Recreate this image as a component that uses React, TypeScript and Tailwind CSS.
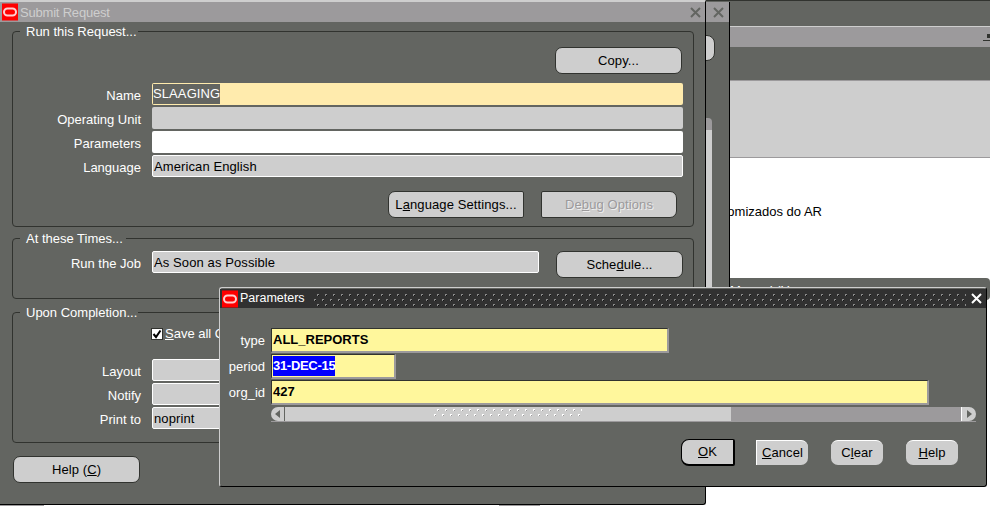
import type { ReactNode } from "react";

function OracleLogo({ className }: { className: string }) {
  return (
    <svg viewBox="0 0 16 17" className={className}>
      <rect width="16" height="17" fill="#ff0000" />
      <rect x="2" y="5" width="12" height="7" rx="3.5" fill="none" stroke="#ffcfcf" strokeWidth="2" />
    </svg>
  );
}

function CloseIcon({ className, color }: { className: string; color: string }) {
  return (
    <svg viewBox="0 0 11 11" className={className}>
      <path d="M1 1L10 10M10 1L1 10" stroke={color} strokeWidth="2" fill="none" />
    </svg>
  );
}

function Dots({ id, light, dark, className }: { id: string; light: string; dark: string; className: string }) {
  return (
    <svg className={className}>
      <defs>
        <pattern id={id} width="8" height="10" patternUnits="userSpaceOnUse">
          <rect x="3" y="0" width="2" height="2" fill={light} />
          <rect x="4" y="1" width="1" height="1" fill={dark} />
          <rect x="0" y="5" width="2" height="2" fill={light} />
          <rect x="1" y="6" width="1" height="1" fill={dark} />
        </pattern>
      </defs>
      <rect width="100%" height="100%" fill={`url(#${id})`} />
    </svg>
  );
}

function GroupBox({ title, titleWidth, className, children }: { title: string; titleWidth: string; className: string; children: ReactNode }) {
  return (
    <div className={`relative ml-[12px] w-[682px] rounded-[4px] border border-[#31332f] ${className}`}>
      <span className={`absolute left-[7px] top-[-9px] h-[18px] bg-[#636561] pl-[6px] text-[13px] leading-[18px] text-white ${titleWidth}`}>
        {title}
      </span>
      {children}
    </div>
  );
}

function Row({ label, children }: { label: string; children: ReactNode }) {
  return (
    <div className="flex items-start gap-[11px]">
      <div className="h-[22px] w-[128px] pt-[2px] text-right text-[13px] leading-[22px] text-white">{label}</div>
      {children}
    </div>
  );
}

function Field({ className, children }: { className: string; children?: ReactNode }) {
  return (
    <div className={`flex h-[22px] items-center rounded-[2px] pl-[1px] pt-[2px] text-[13px] tracking-[0.1px] text-black ${className}`}>
      {children}
    </div>
  );
}

function Btn({ className, children }: { className: string; children: ReactNode }) {
  return (
    <div className={`flex shrink-0 items-center justify-center bg-[#cecece] text-[13px] tracking-[0.1px] text-black ${className}`}>
      {children}
    </div>
  );
}

function ParamRow({ label, children }: { label: string; children: ReactNode }) {
  return (
    <div className="flex h-[25px] items-center gap-[6px]">
      <div className="w-[45px] text-right text-[13px] text-white">{label}</div>
      {children}
    </div>
  );
}

function ParamField({ className, children }: { className: string; children: ReactNode }) {
  return (
    <div className={`flex h-[25px] items-center border-t border-l border-t-[#31332f] border-l-[#31332f] border-r-2 border-b-2 border-r-[#9c9a9c] border-b-[#9c9a9c] bg-[#fff79c] pl-[1px] text-[13px] font-bold text-black ${className}`}>
      {children}
    </div>
  );
}

export default function App() {
  return (
    <div className="relative h-[506px] w-[990px] overflow-hidden bg-white font-['Liberation_Sans',sans-serif]">
      {/* main form behind everything */}
      <div className="flex flex-col">
        <div className="h-[26px] border-t border-[#31332f] bg-[#636561]" />
        <div className="relative h-[21px] border-t border-[#cecece] bg-[#9c9a9c]">
          <div className="absolute right-0 top-[13px] h-px w-[7px] bg-[#31332f]" />
          <div className="absolute right-0 top-[7px] h-[4px] w-[3px] bg-[#31332f]" />
        </div>
        <div className="h-[33px] bg-[#636561]" />
        <div className="h-[78px] border-y border-[#9c9a9c] bg-[#cecece]" />
        <div className="relative h-[120px] bg-white">
          <span className="absolute right-[168px] top-[44px] text-[13px] text-black">Customizados do AR</span>
        </div>
        <div className="ml-[700px] h-[22px] rounded-r-[4px] bg-[#636561] pr-[182px] pt-[5px] text-right text-[13px] leading-[15px] text-white">
          Manual (User Mode)
        </div>
      </div>

      {/* window stacked behind Submit Request */}
      <div className="absolute left-[690px] top-[2px] h-[400px] w-[40px] border-r border-black bg-[#636561]">
        <div className="flex h-[20px] items-center justify-end bg-[#9c9a9c] pr-[5px]">
          <CloseIcon className="h-[11px] w-[11px]" color="#636561" />
        </div>
        <div className="absolute left-[10px] top-[33px] h-[26px] w-[15px] rounded-r-[8px] border border-[#31332f] bg-[#cecece]" />
        <div className="absolute left-[10px] top-[116px] h-[300px] w-[12px] rounded-t-[4px] border-t-[12px] border-[#9c9a9c] bg-[#cecece]" />
      </div>

      {/* Submit Request */}
      <div className="absolute left-0 top-0 h-[505px] w-[706px] rounded-br-[3px] border-t-2 border-r border-b border-t-[#cecece] border-r-black border-b-black bg-[#636561]">
        <div className="flex h-[20px] items-center bg-[#9c9a9c] pl-[2px]">
          <OracleLogo className="h-[18px] w-[16px]" />
          <span className="ml-[2px] pt-[1px] text-[13px] tracking-[-0.2px] text-[#cecece]">Submit Request</span>
          <CloseIcon className="ml-auto mr-[4px] h-[11px] w-[11px]" color="#636561" />
        </div>

        <GroupBox title="Run this Request..." titleWidth="w-[118px]" className="mt-[9px] h-[196px] pt-[15px]">
          <div className="flex justify-end pr-[11px]">
            <Btn className="h-[27px] w-[127px] rounded-[7px] border border-[#31332f]">
              Copy...
            </Btn>
          </div>
          <div className="mt-[9px] flex flex-col gap-[2px]">
            <Row label="Name">
              <Field className="w-[531px] !pt-0 bg-[#ffebad]">
                <span className="bg-[#636561] text-white">SLAAGING</span>
              </Field>
            </Row>
            <Row label="Operating Unit">
              <Field className="w-[531px] bg-[#cecece]" />
            </Row>
            <Row label="Parameters">
              <Field className="w-[531px] bg-white" />
            </Row>
            <Row label="Language">
              <Field className="w-[531px] border border-white bg-[#cecece]">American English</Field>
            </Row>
          </div>
          <div className="mt-[14px] flex justify-end gap-[17px] pr-[16px]">
            <Btn className="h-[27px] w-[136px] rounded-l-[7px] rounded-r-[2px] border border-[#31332f]">
              <span>
                L<u>a</u>nguage Settings...
              </span>
            </Btn>
            <Btn className="h-[27px] w-[136px] rounded-l-[2px] rounded-r-[7px] border border-[#31332f]">
              <span className="text-[#9c9a9c] [text-shadow:1px_1px_0_#eeeeee]">
                De<u>b</u>ug Options
              </span>
            </Btn>
          </div>
        </GroupBox>

        <GroupBox title="At these Times..." titleWidth="w-[106px]" className="mt-[11px] h-[61px] pt-[12px]">
          <div className="flex items-start">
            <Row label="Run the Job">
              <Field className="w-[387px] border border-white bg-[#cecece]">As Soon as Possible</Field>
            </Row>
            <Btn className="ml-[17px] h-[27px] w-[127px] rounded-[7px] border border-[#31332f]">
              <span>
                Sche<u>d</u>ule...
              </span>
            </Btn>
          </div>
        </GroupBox>

        <GroupBox title="Upon Completion..." titleWidth="w-[118px]" className="mt-[13px] h-[131px] pt-[13px]">
          <div className="ml-[138px] flex h-[16px] items-center gap-[2px] text-[13px] text-white">
            <span className="flex h-[12px] w-[12px] shrink-0 items-center justify-center border border-[#31332f] bg-white">
              <svg viewBox="0 0 10 10" className="h-[10px] w-[10px]">
                <path d="M1.5 5L4 8L8.5 1.5" stroke="#000" strokeWidth="2" fill="none" />
              </svg>
            </span>
            <span className="whitespace-nowrap">
              <u>S</u>ave all O
            </span>
          </div>
          <div className="mt-[17px] flex flex-col gap-[2px]">
            <Row label="Layout">
              <Field className="w-[531px] border border-white bg-[#cecece]" />
            </Row>
            <Row label="Notify">
              <Field className="w-[531px] border border-white bg-[#cecece]" />
            </Row>
            <Row label="Print to">
              <Field className="w-[531px] border border-white bg-[#cecece]">noprint</Field>
            </Row>
          </div>
        </GroupBox>

        <Btn className="ml-[13px] mt-[13px] h-[27px] w-[127px] rounded-[7px] border border-[#31332f]">
          <span>
            Help (<u>C</u>)
          </span>
        </Btn>
      </div>

      {/* bits of the taskbar peeking out below */}
      <div className="absolute left-0 top-[505px] h-px w-[44px] bg-[#9c9a9c]" />
      <div className="absolute left-[499px] top-[505px] h-px w-[41px] bg-[#9c9a9c]" />

      {/* Parameters dialog */}
      <div className="absolute left-[219px] top-[287px] h-[200px] w-[768px] rounded-[3px] border-t border-l border-r border-b border-t-[#cecece] border-l-[#cecece] border-r-black border-b-black bg-[#636561]">
        <div className="mt-[1px] flex h-[19px] items-center bg-[#313131] pl-[2px]">
          <OracleLogo className="h-[18px] w-[16px]" />
          <span className="ml-[2px] text-[12.5px] text-white">Parameters</span>
          <Dots id="title-dots" light="#8a8a8a" dark="#111" className="ml-[9px] mt-[2px] h-[12px] w-[652px]" />
          <CloseIcon className="ml-[5px] h-[11px] w-[11px]" color="#ffffff" />
        </div>

        <div className="mt-[20px] flex flex-col gap-[1px]">
          <ParamRow label="type">
            <ParamField className="w-[398px]">ALL_REPORTS</ParamField>
          </ParamRow>
          <ParamRow label="period">
            <ParamField className="w-[125px]">
              <span className="bg-[#0000ff] tracking-[-0.3px] text-white">31-DEC-15</span>
            </ParamField>
          </ParamRow>
          <ParamRow label="org_id">
            <ParamField className="w-[658px]">427</ParamField>
          </ParamRow>
        </div>

        <div className="ml-[51px] mt-[2px] flex h-[15px] w-[705px] border-b border-[#9c9a9c]">
          <div className="flex w-[14px] items-center justify-center rounded-l-[7px] border-r border-[#636561] bg-[#cecece]">
            <svg viewBox="0 0 6 8" className="h-[8px] w-[6px]">
              <path d="M5 0V8L0 4Z" fill="#636561" />
            </svg>
          </div>
          <div className="flex w-[446px] items-center justify-center bg-[#cecece]">
            <Dots id="thumb-dots" light="#ffffff" dark="#9c9a9c" className="h-[10px] w-[148px]" />
          </div>
          <div className="grow bg-[#9c9a9c]" />
          <div className="flex w-[15px] items-center justify-center rounded-r-[7px] border-l border-white bg-[#cecece]">
            <svg viewBox="0 0 6 8" className="h-[8px] w-[6px]">
              <path d="M1 0V8L6 4Z" fill="#636561" />
            </svg>
          </div>
        </div>

        <div className="mt-[17px] flex items-center justify-end pr-[28px]">
          <Btn className="h-[27px] w-[54px] rounded-l-[8px] rounded-r-[2px] border border-black border-b-2 border-r-2">
            <span>
              <u>O</u>K
            </span>
          </Btn>
          <Btn className="ml-[21px] h-[25px] w-[52px] rounded-r-[7px] border-t border-l border-white">
            <span>
              <u>C</u>ancel
            </span>
          </Btn>
          <Btn className="ml-[23px] h-[25px] w-[52px] rounded-[7px] border-t border-white">
            <span>
              C<u>l</u>ear
            </span>
          </Btn>
          <Btn className="ml-[23px] h-[25px] w-[52px] rounded-[7px] border-t border-white">
            <span>
              <u>H</u>elp
            </span>
          </Btn>
        </div>
      </div>
    </div>
  );
}
